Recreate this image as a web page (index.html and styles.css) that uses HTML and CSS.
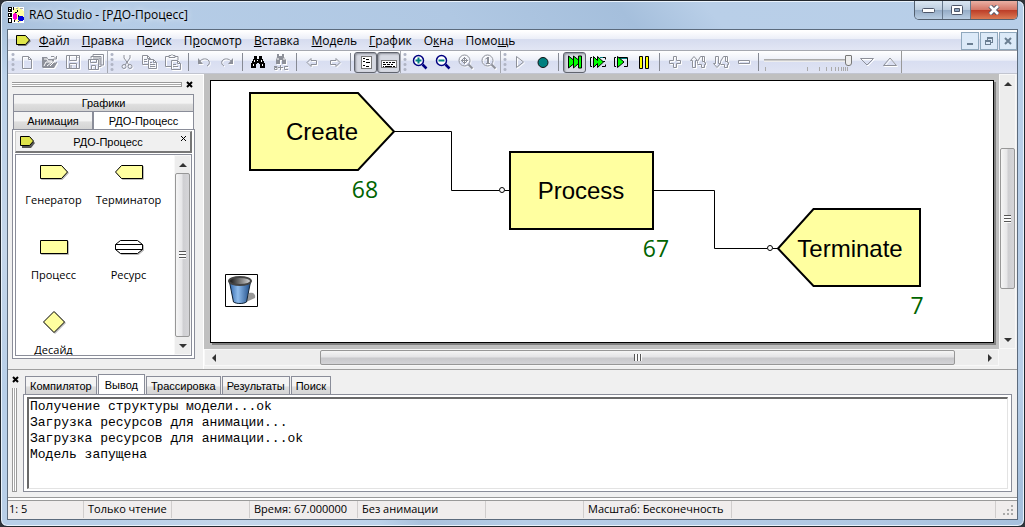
FILE: index.html
```html
<!DOCTYPE html>
<html lang="ru">
<head>
<meta charset="utf-8">
<title>RAO Studio - [РДО-Процесс]</title>
<link rel="stylesheet" href="styles.css">
</head>
<body>
<div class="window">
  <header class="titlebar">
    <svg class="app-icon" width="16" height="16" viewBox="0 0 16 16" shape-rendering="crispEdges">
      <path fill="#fff" d="M0 0h16v16H0z"/><path fill="#ffffa0" d="M5 2l5-2 6 4v8l-5 4-6-4z"/>
      <path d="M0 0h4v5H0zM0 6h4v4H0zM0 11h4v5H0z"/><path fill="#fff" d="M1 1h2v1H1zM1 3h1v1H1zM1 7h1v2H1zM1 12h2v3H1z"/>
      <path d="M5 0h1v3H5zM7 5h2v1H7zM9 3h1v2H9zM6 11h1v4H6zM10 8h1v2h-1z"/>
      <path fill="#f0c" d="M5 7h4v5H5zM6 6h2v7H6z"/><path fill="#00d" d="M11 9h4v5h-4zM10 10h6v3h-6zM10 14h1v1h-1z"/>
      <path fill="#aaa" d="M12 1h3v1h-3zM8 1h2v1H8z"/>
    </svg>
    <h1 class="title">RAO Studio - [РДО-Процесс]</h1>
    <div class="caption">
      <button class="cap" aria-label="Свернуть"><svg width="13" height="7" viewBox="0 0 13 7"><rect x=".5" y="1.500" width="12" height="4" rx="1" fill="#fff" stroke="#4d5669"/></svg></button>
      <button class="cap" aria-label="Развернуть"><svg width="12" height="10" viewBox="0 0 12 10"><rect x=".5" y=".5" width="11" height="9" rx="1" fill="#fff" stroke="#4d5669"/><path fill="#8fa6c0" stroke="#4d5669" d="M3.500 3.500h5v3h-5z"/></svg></button>
      <button class="cap cap-close" aria-label="Закрыть"><svg width="12" height="10" viewBox="0 0 12 10"><path fill="none" stroke="#4d5669" stroke-width="4.500" d="M2 1l8 8M10 1L2 9"/><path fill="none" stroke="#fff" stroke-width="2.600" d="M2 1l8 8M10 1L2 9"/></svg></button>
    </div>
  </header>

  <main class="client">
    <nav class="menubar">
      <svg class="doc-icon" width="15" height="11" viewBox="0 0 15 11"><path d="M2 2h8l5 4-5 5H2z" fill="#777"/><path fill="#e0e64a" stroke="#000" d="M.5.5h9l4 4.500-4 4.500h-9z"/></svg>
      <button><u>Ф</u>айл</button><button><u>П</u>равка</button><button>П<u>о</u>иск</button><button>П<u>р</u>осмотр</button><button><u>В</u>ставка</button><button><u>М</u>одель</button><button><u>Г</u>рафик</button><button>О<u>к</u>на</button><button>Помо<u>щ</u>ь</button>
      <div class="mdi">
        <button aria-label="Свернуть документ"><svg width="10" height="10" viewBox="0 0 10 10"><path fill="#6b7f92" d="M2 7h6v2H2z"/></svg></button>
        <button aria-label="Восстановить документ"><svg width="10" height="10" viewBox="0 0 10 10" shape-rendering="crispEdges"><path fill="#6b7f92" d="M3 1h6v6H7V6h1V3H4v1H3zM1 4h6v5H1z"/><path fill="#dceaf8" d="M2 6h4v2H2z"/></svg></button>
        <button aria-label="Закрыть документ"><svg width="10" height="10" viewBox="0 0 10 10"><path fill="none" stroke="#6b7f92" stroke-width="2" d="M2 2l6 6M8 2L2 8"/></svg></button>
      </div>
    </nav>

    <div class="toolbar">
      <span class="grip first"></span>
      <button class="tb off" aria-label="Новый"><svg viewBox="0 0 16 16"><path d="M3.500 2.500h6l3 3v9h-9zM9.500 2.500v3h3"/></svg></button>
      <button class="tb off" aria-label="Открыть"><svg viewBox="0 0 16 16"><path class="s" d="M0 3h5l1 2h6v3h3v1l-3 5H1L0 13z"/><path stroke="#fff" d="M2 12l2-4h10M2 5h3l1 2h4M5 12l5-4M8 12l4-4"/><path d="M9 2.500h3l2 2M14.500 2v3h-3"/></svg></button>
      <button class="tb off" aria-label="Сохранить"><svg viewBox="0 0 16 16"><path d="M1.500 1.500h13v13h-13zM4.500 1.500v5h7v-5M4.500 14.500v-5h7v5M13 3v1M6 11v3"/></svg></button>
      <button class="tb off" aria-label="Сохранить все"><svg viewBox="0 0 16 16"><path d="M.5 5.500h10v10H.5zM2.500 5.500v3h6v-3M3.500 15.500v-4h4v4M3 4.500v-2h10v10h-2M5 2.500v-2h10.500V11H13M5 4h7v7"/></svg></button>
      <span class="grip"></span>
      <button class="tb off" aria-label="Вырезать"><svg viewBox="0 0 16 16"><path d="M5 1v3l5 7M11 1v3l-5 7M8 7v2"/><circle cx="5" cy="12.500" r="2"/><circle cx="11" cy="12.500" r="2"/></svg></button>
      <button class="tb off" aria-label="Копировать"><svg viewBox="0 0 16 16"><path d="M6 10.500H.5v-9h5l3 3M5.500 1.500v3h3M6.500 5.500h5l3 3v6h-8zM11.500 5.500v3h3M2 5.500h3M2 7.500h3M8 10.500h5M8 12.500h5M8 8.500h2"/></svg></button>
      <button class="tb off" aria-label="Вставить"><svg viewBox="0 0 16 16"><path d="M6 12.500H.5v-10H4M10 2.500h3V6M4 3.500h6v-2H8l-1-1-1 1H4zM6.500 6.500h6l3 3v6h-9zM12.500 6.500v3h3M8 10.500h3M8 12.500h5"/></svg></button>
      <span class="sep"></span>
      <button class="tb off" aria-label="Отменить"><svg viewBox="0 0 16 16"><path d="M3 8c3-4 8-4 10-1 1 2 0 4-2 5"/><path class="s" d="M2 4l5 6H2z"/></svg></button>
      <button class="tb off" aria-label="Повторить"><svg viewBox="0 0 16 16"><path d="M13 8C10 4 5 4 3 7c-1 2 0 4 2 5"/><path class="s" d="M14 4L9 10h5z"/></svg></button>
      <span class="sep"></span>
      <button class="tb" aria-label="Найти"><svg viewBox="0 0 16 16" shape-rendering="crispEdges"><path d="M4 2h3v3h2V2h3v3h1l1 4h1v5h-5v-4H9V9H7v1H6v4H1V9h1l1-4h1z"/><path fill="#fff" d="M4 6h1v2H4zM3 10h1v2H3zM11 6h1v2h-1zM12 10h1v2h-1zM7 6h1v1H7z"/></svg></button>
      <button class="tb off" aria-label="Заменить"><svg viewBox="0 0 16 16"><path class="s" d="M4 0h2v2h3V0h2v3l2 3v4H9V6H7v4H3V6l1-3z"/><path stroke="#fff" d="M5 4v2M11 4v2"/><path d="M1 12.500h3v3H1.500v-2H4M5 13.500h5M7.500 11v5M15 12.500h-3.500v3H15"/></svg></button>
      <span class="sep"></span>
      <button class="tb off" aria-label="Назад"><svg viewBox="0 0 16 16"><path d="M3 8.500l4-4v2h5.500v4H7v2z"/></svg></button>
      <button class="tb off" aria-label="Вперёд"><svg viewBox="0 0 16 16"><path d="M13 8.500l-4-4v2H3.500v4H9v2z"/></svg></button>
      <span class="sep"></span>
      <button class="tb pressed" aria-label="Панель объектов"><svg viewBox="0 0 16 16" shape-rendering="crispEdges"><path fill="#fff" stroke="#777" d="M3.500 2.500h10v12h-10z"/><path d="M5 4h2v1H5zM5 7h2v1H5zM5 11h2v1H5zM8 5h3v1H8zM8 8h4v1H8zM8 12h3v1H8z"/></svg></button>
      <button class="tb pressed" aria-label="Панель вывода"><svg viewBox="0 0 16 16" shape-rendering="crispEdges"><path fill="#fff" stroke="#777" d="M.5 6.500h15v7H.5z"/><path d="M2 8h2v1H2zM5 8h2v1H5zM8 8h2v1H8zM11 8h3v1h-3zM2 10h3v1H2zM6 10h3v1H6zM10 10h2v1h-2zM2 12h1v1H2zM4 12h7v1H4zM12 12h2v1h-2z"/></svg></button>
      <span class="grip"></span>
      <button class="tb" aria-label="Увеличить"><svg viewBox="0 0 16 16"><circle cx="6.500" cy="6.500" r="5" fill="#fff" stroke="#000080" stroke-width="1.500"/><path stroke="#000080" stroke-width="2.500" d="M10.500 10.500l4 4"/><path stroke="#008080" stroke-width="2" d="M3.500 6.500h6M6.500 3.500v6"/></svg></button>
      <button class="tb" aria-label="Уменьшить"><svg viewBox="0 0 16 16"><circle cx="6.500" cy="6.500" r="5" fill="#fff" stroke="#000080" stroke-width="1.500"/><path stroke="#000080" stroke-width="2.500" d="M10.500 10.500l4 4"/><path stroke="#008080" stroke-width="2" d="M3.500 6.500h6"/></svg></button>
      <button class="tb off" aria-label="Вписать"><svg viewBox="0 0 16 16"><circle cx="6.500" cy="6.500" r="5.500"/><path stroke-width="2" d="M10.500 10.500l4 4"/><path d="M3 6.500h7M6.500 3v7M5 4.500h3M5 8.500h3M4.500 5v3M8.500 5v3"/></svg></button>
      <button class="tb off" aria-label="Масштаб 1:1"><svg viewBox="0 0 16 16"><circle cx="6.500" cy="6.500" r="5.500"/><path stroke-width="2" d="M10.500 10.500l4 4M7 3v7"/><path d="M4.500 5L7 3.500M5 9.500h4"/></svg></button>
      <span class="grip"></span>
      <button class="tb off" aria-label="Запустить"><svg viewBox="0 0 16 16"><path d="M4.500 2.500v11l7-5.500z"/></svg></button>
      <button class="tb" aria-label="Остановить"><svg viewBox="0 0 16 16"><circle cx="8" cy="8.500" r="5" fill="#008080" stroke="#111"/></svg></button>
      <span class="sep wide"></span>
      <button class="tb pressed" aria-label="Без ограничения скорости"><svg viewBox="0 0 16 16"><path fill="#0f0" stroke="#000" d="M1.500 2v12l5-4v4l5-4.500V14h3V2h-3v4L6.500 2v4z"/><path stroke="#000" d="M6.500 6v4M11.500 6v4"/></svg></button>
      <button class="tb" aria-label="Быстро"><svg viewBox="0 0 16 16"><path fill="none" stroke="#000" d="M2 3.500H.5v9H2M12 3.500h3.500v2M12 12.500h3.500v-2M12 7.500h3"/><path fill="#0f0" stroke="#000" d="M3.500 2.500v11l4-4v4l6-5.500-6-5.500v4z"/><path stroke="#008080" d="M10 3.500h3"/></svg></button>
      <button class="tb" aria-label="Шаг"><svg viewBox="0 0 16 16"><path fill="none" stroke="#000" d="M3 3.500H1.500v9H3M6 3.500h8.500v9H11"/><path stroke="#008080" d="M7 4.500h7"/><path fill="#0f0" stroke="#000" d="M4.500 2.500v11l6.500-5.500z"/></svg></button>
      <button class="tb" aria-label="Пауза"><svg viewBox="0 0 16 16"><path fill="#ff0" stroke="#000" d="M3.500 2.500h3v12h-3zM9.500 2.500h3v12h-3z"/></svg></button>
      <span class="sep"></span>
      <button class="tb off" aria-label="Быстрее"><svg viewBox="0 0 16 16"><path d="M6.500 2.500h3v4h4v3h-4v4h-3v-4h-4v-3h4z"/></svg></button>
      <button class="tb off" aria-label="Быстрее в 4 раза"><svg viewBox="0 0 16 16"><path d="M.5 6.500l3.500-4 3.500 4h-2v7h-3v-7zM7.500 9.500v-2l3-5h2v5h2v-5h-3M7.500 10.500h4v3h3v-3h1v-2h-1v-5"/></svg></button>
      <button class="tb off" aria-label="Медленнее в 4 раза"><svg viewBox="0 0 16 16"><path d="M.5 9.500l3.500 4 3.500-4h-2v-7h-3v7zM7.500 9.500v-2l3-5h2v5h2v-5h-3M7.500 10.500h4v3h3v-3h1v-2h-1v-5"/></svg></button>
      <button class="tb off" aria-label="Медленнее"><svg viewBox="0 0 16 16"><path d="M2.500 6.500h11v3h-11z"/></svg></button>
      <span class="sep slim"></span>
      <div class="speed">
        <input type="range" min="0" max="100" value="100" aria-label="Скорость">
        <svg width="88" height="4" viewBox="0 0 88 4" shape-rendering="crispEdges"><path stroke="#aaa" d="M1.500 0v4M43.500 0v4M55.500 0v4M62.500 0v4M67.500 0v4M71.500 0v4M74.500 0v4M77.500 0v4M79.500 0v4M81.500 0v4M83.500 0v4"/></svg>
      </div>
      <button class="tb off" aria-label="Вниз"><svg viewBox="0 0 16 16"><path d="M1.500 4.500h13L8 11z"/></svg></button>
      <button class="tb off" aria-label="Вверх"><svg viewBox="0 0 16 16"><path d="M1.500 11.500h13L8 4z"/></svg></button>
      <span class="bar-end"></span>
    </div>

    <div class="workspace">
      <aside class="side">
        <div class="dock-head"><span class="dock-grip"></span><button class="x" aria-label="Закрыть панель"><svg width="7" height="7" viewBox="0 0 7 7"><path stroke="#000" stroke-width="2" d="M1 1l5 5M6 1L1 6"/></svg></button></div>
        <div class="side-tabs">
          <button class="stab full">Графики</button>
          <button class="stab">Анимация</button><button class="stab active">РДО-Процесс</button>
        </div>
        <div class="side-body">
          <div class="palette-head">
            <svg width="15" height="12" viewBox="0 0 15 12"><path d="M2 2h8l5 5-4 5H2z" fill="#555"/><path fill="#dfe44a" stroke="#000" d="M.5.500h9l4 4.500-4 4.500h-9z"/></svg>
            <span>РДО-Процесс</span>
            <button class="x" aria-label="Закрыть палитру"><svg width="5" height="5" viewBox="0 0 5 5"><path stroke="#000" d="M0 0l5 5M5 0L0 5"/></svg></button>
          </div>
          <div class="palette">
            <div class="items">
              <div class="item"><svg viewBox="0 0 32 32"><path fill="#ffffa0" stroke="#000" d="M2.500 9.500h21l6 6.500-6 6.500h-21z"/></svg>Генератор</div>
              <div class="item"><svg viewBox="0 0 32 32"><path fill="#ffffa0" stroke="#000" d="M29.500 9.500h-21l-6 6.500 6 6.500h21z"/></svg>Терминатор</div>
              <div class="item"><svg viewBox="0 0 32 32"><path fill="#ffffa0" stroke="#000" d="M2.500 9.500h27v13h-27z"/></svg>Процесс</div>
              <div class="item"><svg viewBox="0 0 32 32"><path fill="#fff" stroke="#000" d="M7.500 9.500h17l5 4v5l-5 4h-17l-5-4v-5zM2.500 13.500h27M2.500 18.500h27"/></svg>Ресурс</div>
              <div class="item"><svg viewBox="0 0 32 32"><path fill="#ffffa0" stroke="#000" d="M16 5.500L26.500 16 16 26.500 5.500 16z"/></svg>Десайд</div>
            </div>
            <div class="vscroll palette-scroll">
              <span class="arrow up"></span><div class="track"><span class="thumb"></span></div><span class="arrow down"></span>
            </div>
          </div>
        </div>
      </aside>

      <section class="view">
        <div class="desk"><div class="paper">
          <svg class="diagram" width="782" height="261" viewBox="211 81 782 261" role="img" aria-label="Модель процесса">
            <defs>
              <linearGradient id="bin"><stop offset="0" stop-color="#2d63a8"/><stop offset=".4" stop-color="#8fbcec"/><stop offset="1" stop-color="#1d4a84"/></linearGradient>
              <linearGradient id="rim"><stop offset="0" stop-color="#111"/><stop offset="1" stop-color="#ddd"/></linearGradient>
            </defs>
            <g fill="#ffffa0" stroke="#000" stroke-width="2">
              <path d="M250 93h108l36 38.500-36 38.500H250z"/><path d="M510 152h143v77H510z"/><path d="M920 209H813.500L778 248.500l35.500 37.500H920z"/>
            </g>
            <g fill="none" stroke="#000"><path d="M394 131.500h57.500v59H499M505 190.500h5M654 190.500h60.500v58H767M773 248.500h5"/></g>
            <g fill="#fff" stroke="#000"><circle cx="502" cy="190" r="2.500"/><circle cx="770" cy="248" r="2.500"/></g>
            <g class="node-name"><text x="322" y="140">Create</text><text x="581" y="199">Process</text><text x="850" y="257">Terminate</text></g>
            <g class="count"><text x="365" y="198">68</text><text x="656" y="257">67</text><text x="917" y="314">7</text></g>
            <path fill="#fff" stroke="#000" d="M225.500 274.500h32v32h-32z"/>
            <path fill="#999" d="M246 302l9-4c1-4-2-6-6-5z"/>
            <path fill="url(#bin)" stroke="#123" d="M229.500 282l4 20c3 2 10 2 13 0l4-20z"/>
            <ellipse cx="240" cy="281" rx="11" ry="4" fill="url(#rim)" stroke="#444" stroke-width="2"/>
          </svg>
        </div></div>
        <div class="vscroll"><span class="arrow up"></span><div class="track main-track"><span class="thumb"></span></div><span class="arrow down"></span></div>
        <div class="hscroll"><span class="arrow left"></span><div class="track"><span class="thumb"></span></div><span class="arrow right"></span></div>
        <div class="corner"></div>
      </section>
    </div>

    <section class="output">
      <div class="out-rail"><button class="x" aria-label="Закрыть вывод"><svg width="7" height="7" viewBox="0 0 7 7"><path stroke="#000" stroke-width="2" d="M1 1l5 5M6 1L1 6"/></svg></button><span class="rail-grip"></span></div>
      <div class="out-main">
        <div class="out-tabs"><button>Компилятор</button><button class="active">Вывод</button><button>Трассировка</button><button>Результаты</button><button>Поиск</button></div>
        <div class="out-frame"><textarea readonly aria-label="Вывод" spellcheck="false">Получение структуры модели...ok
Загрузка ресурсов для анимации...
Загрузка ресурсов для анимации...ok
Модель запущена</textarea></div>
      </div>
    </section>

    <footer class="status">
      <span class="pos">1: 5</span><span class="mode">Только чтение</span><span class="gap1"></span><span class="time">Время: 67.000000</span><span class="anim">Без анимации</span><span class="gap2"></span><span class="zoom">Масштаб: Бесконечность</span><span class="rest"></span>
      <svg width="12" height="12" viewBox="0 0 12 12"><path fill="#aaa" d="M9 1h2v2H9zM9 5h2v2H9zM9 9h2v2H9zM5 5h2v2H5zM5 9h2v2H5zM1 9h2v2H1z"/></svg>
    </footer>
  </main>
</div>
</body>
</html>
```
FILE: styles.css
```css
* { box-sizing: border-box; }
body { margin: 0; background: #30343a; font: 12px/16px "Open Sans", "Noto Sans", sans-serif; color: #000; }
button { margin: 0; padding: 0; border: 0; background: none; font: inherit; color: inherit; }
svg { display: block; }
.window {
  min-height: 100vh; display: flex; flex-direction: column; padding: 0 6px 6px;
  border: 1px solid #22272e; border-radius: 7px; box-shadow: inset 0 0 0 1px #eaf3fc;
  background: linear-gradient(50deg, #b8cfe8 0 8%, #c4d6ea 16%, #bcd2ea 26%, #a9c1dc 29%, #b6cde7 36%, #b0c8e3 60%, #a5bfdc 72%, #b9cfe8 78%, #b7cee8);
}
.titlebar { display: flex; height: 28px; align-items: center; gap: 5px; padding-left: 1px; }
.title { margin: 0; flex: 1; font-size: 12px; font-weight: 400; text-shadow: 0 0 6px #fff; }
.caption { align-self: flex-start; display: flex; border: 1px solid #53606f; border-top: 0; border-radius: 0 0 5px 5px; overflow: hidden; }
.cap { width: 28px; height: 18px; display: grid; place-items: center; border-right: 1px solid #66788c; background: linear-gradient(#dbe7f3, #bccddf 48%, #94abc5 50%, #b9cde2); }
.cap-close { width: 46px; border: 0; background: linear-gradient(#e9b0a4, #d47767 48%, #bb3b26 50%, #dc7b54); }

.client { flex: 1; display: flex; flex-direction: column; background: #f0f0f0; border: 1px solid #5c6b7d; }
.menubar { display: flex; align-items: center; height: 20px; padding-left: 8px; border-top: 1px solid #fff; background: linear-gradient(#fff, #eceff8 40%, #d6dcef 45%, #e2e6f4); }
.doc-icon { margin-right: 2px; }
.menubar > button { padding: 0 6px; }
.mdi { margin-left: auto; display: flex; gap: 1px; }
.mdi button { width: 18px; height: 18px; display: grid; place-items: center; border: 1px solid #8fa8bd; background: #dceaf8; }
.toolbar { display: flex; align-items: center; height: 24px; border-top: 1px solid #a5a8b0; border-bottom: 1px solid #c2c5d0; background: linear-gradient(#fff, #eceff8 42%, #d8def1 46%, #e0e4f3); }
.tb { width: 23px; height: 21px; flex: none; display: grid; place-items: center; }
.tb svg { width: 16px; height: 16px; }
.off svg { fill: none; filter: drop-shadow(1px 1px 0 #fff); stroke: #8d9099; }
.off .s { fill: #8d9099; stroke: none; }
.pressed { border: 1px solid #60646e; border-radius: 3px; background: #d6d9e2; box-shadow: inset 1px 1px 2px #8c8f98; }
.grip { width: 8px; height: 22px; flex: none; border-left: 1px solid #a5a8b0; background: radial-gradient(circle, #b0b5c5 1px, transparent 2px) 1px 1px / 6px 5px repeat-y; }
.grip.first { width: 7px; border-left-color: transparent; }
.sep { width: 8px; height: 18px; flex: none; background: linear-gradient(#868a94, #868a94) center / 1px 18px no-repeat; }
.sep.wide { width: 9px; }
.sep.slim { width: 6px; }
.speed { width: 94px; padding: 0 3px; }
.speed input { appearance: none; display: block; width: 88px; height: 14px; margin: 0; background: linear-gradient(#999, #fff) center / 100% 3px no-repeat; }
.speed input::-webkit-slider-thumb { appearance: none; width: 7px; height: 11px; border: 1px solid #777; border-radius: 1px 1px 3px 3px; background: #eee; }
.bar-end { height: 22px; border-left: 1px solid #999; }

.workspace { flex: 1; display: flex; min-height: 0; border-bottom: 1px solid #a0a0a0; }
.side { width: 196px; flex: none; display: flex; flex-direction: column; padding: 5px 8px 10px 4px; border-top: 1px solid #fff; border-right: 1px solid #fff; }
.dock-head { display: flex; align-items: center; gap: 4px; height: 8px; }
.dock-grip { width: 170px; height: 5px; border: solid #999; border-width: 1px 1px 1px 0; background: linear-gradient(#fff 33%, #aaa 33% 66%, #fff 66%); }
.x { display: grid; place-items: center; }
.side-tabs { display: grid; grid-template-columns: 80px 1fr; margin: 6px 1px 0 1px; font: 11px/16px "Liberation Sans", sans-serif; }
.stab { height: 18px; border: 1px solid #8a8d99; border-bottom: 0; background: linear-gradient(#f4f4f4 50%, #dedede 60%, #d4d4d4); }
.stab.full { grid-column: span 2; height: 17px; }
.stab.active { background: #fff; }
.side-body { flex: 1; display: flex; flex-direction: column; min-height: 0; padding: 1px 2px 2px; border: 1px solid #8a8d99; background: #fff; }
.palette-head { display: flex; align-items: center; height: 22px; padding: 0 4px; flex: none; background: #f0f0f0; border: 1px solid #ccc; border-right: 2px solid #777; border-bottom: 2px solid #777; font: 11px/16px "Liberation Sans", sans-serif; }
.palette-head span { flex: 1; text-align: center; }
.palette-head .x { align-self: flex-start; margin-top: 4px; }
.palette { flex: 1 1 0; min-height: 0; display: flex; overflow: hidden; margin-top: 1px; border: 1px solid #8a8d99; background: #fff; }
.items { flex: 1; height: 0; display: grid; grid-template-columns: 75px 75px; grid-auto-rows: 75px; font-size: 11px; }
.item { display: flex; flex-direction: column; align-items: center; gap: 4px; padding-top: 1px; }
.item svg { width: 32px; height: 32px; flex: none; filter: drop-shadow(1px 1px 0 #bbb); }

.vscroll { display: flex; flex-direction: column; align-items: center; width: 17px; background: #ededed; border: 1px solid #f8f8f8; }
.hscroll { display: flex; align-items: center; height: 17px; background: #ededed; border: 1px solid #f8f8f8; }
.arrow { width: 17px; height: 17px; flex: none; display: grid; place-items: center; }
.arrow::before { content: ""; border: 4px solid transparent; }
.up::before { border-top: 0; border-bottom-color: #333; }
.down::before { border-bottom: 0; border-top-color: #333; }
.left::before { border-left: 0; border-right-color: #333; }
.right::before { border-right: 0; border-left-color: #333; }
.track { flex: 1; display: flex; min-height: 0; }
.thumb { flex: none; display: grid; place-items: center; border: 1px solid #979797; border-radius: 2px; }
.thumb::before { content: ""; width: 7px; height: 8px; background: repeating-linear-gradient(#555 0 1px, #fafafa 1px 3px); }
.vscroll .track { flex-direction: column; }
.vscroll .thumb { width: 15px; background: linear-gradient(90deg, #f5f5f5, #e6e6e8 45%, #cfcfd2 55%, #d5d5d8); }
.palette-scroll .thumb { height: 100%; }
.main-track { padding-top: 56px; }
.main-track .thumb { flex: 0 1 141px; }
.view { flex: 1; min-width: 0; display: grid; grid-template: 1fr 20px / 1fr 18px; }
.desk { display: flex; padding: 6px; padding-right: 5px; background: #c0c0c0; }
.paper { flex: 1; min-width: 0; overflow: hidden; background: #fff; border: 1px solid #000; box-shadow: 2px 2px 0 #808080; }
.node-name { font: 24px "Liberation Sans", sans-serif; text-anchor: middle; fill: #000; }
.count { font: 23px "Open Sans", sans-serif; text-anchor: middle; fill: #006400; }
.hscroll .thumb { height: 15px; width: 84%; margin-left: 13%; background: linear-gradient(#f5f5f5, #e4e4e6 45%, #c8c8cb 55%, #d3d3d6); }
.hscroll .thumb::before { width: 8px; height: 7px; background: repeating-linear-gradient(90deg, #555 0 1px, #fafafa 1px 3px); }
.hscroll .track { padding-right: 3px; }

.output { display: flex; height: 127px; flex: none; padding: 4px 5px 5px 3px; }
.out-rail { width: 12px; display: flex; flex-direction: column; align-items: flex-start; gap: 5px; padding-top: 2px; }
.out-rail .x { width: 8px; height: 7px; }
.rail-grip { flex: 1; width: 5px; margin-left: 1px; border: solid #999; border-width: 0 1px 1px; background: linear-gradient(90deg, #fff 33%, #aaa 33% 66%, #fff 66%); }
.out-main { flex: 1; min-width: 0; display: flex; flex-direction: column; }
.out-tabs { display: flex; align-items: flex-end; margin-left: 2px; font: 11px/16px "Liberation Sans", sans-serif; }
.out-tabs button { height: 18px; padding: 0 4px; border: 1px solid #8a8d99; border-bottom: 0; background: linear-gradient(#f4f4f4 50%, #dedede 60%, #d4d4d4); }
.out-tabs button + button { margin-left: 1px; }
.out-tabs .active { height: 20px; padding: 0 6px; background: #fff; }
.out-frame { flex: 1; display: flex; padding: 2px 3px; border: 1px solid #8a8d99; background: #fff; }
textarea { flex: 1; resize: none; outline: 0; margin: 0; padding: 0 1px; border: 1px solid #e3e3e3; border-top: 2px solid #696969; border-left: 2px solid #696969; background: #fff; overflow: hidden; font: 13px/16px "Liberation Mono", monospace; color: #000; }
.status { display: flex; align-items: center; height: 22px; flex: none; padding-top: 2px; border-top: 1px solid #999; box-shadow: inset 0 2px 0 #fff, inset 0 3px 0 #999; background: #f0eded; font-size: 11px; }
.status span { height: 17px; padding-left: 4px; border-right: 1px solid #d0cdcd; white-space: nowrap; flex: none; }
.status .pos { width: 76px; padding-left: 1px; }
.status .mode { width: 88px; }
.status .gap1 { width: 78px; }
.status .time { width: 108px; }
.status .anim { width: 128px; }
.status .gap2 { width: 98px; }
.status .zoom { width: 148px; }
.status .rest { flex: 1; }
.status svg { margin: 0 3px 0 6px; }
```
